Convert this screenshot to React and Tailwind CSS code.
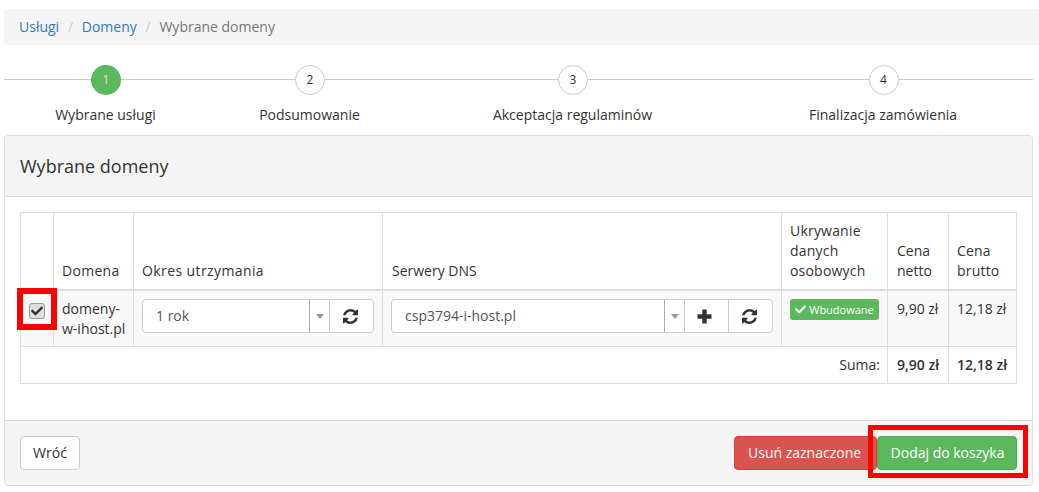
import React from "react";
import { FaCheck } from "react-icons/fa";

const steps = [
  ["1", "Wybrane usługi", true],
  ["2", "Podsumowanie", false],
  ["3", "Akceptacja regulaminów", false],
  ["4", "Finalizacja zamówienia", false],
];

function Caret() {
  return <span className="block w-0 h-0 border-x-[4px] border-x-transparent border-t-[5px] border-t-[#999]" />;
}

function Refresh() {
  return (
    <svg width="15" height="15" viewBox="0 0 1536 1536" fill="currentColor">
      <path d="M1511 928q0 5-1 7-64 268-268 434.5T764 1536q-146 0-282.500-55T238 1324l-129 129q-19 19-45 19t-45-19-19-45V960q0-26 19-45t45-19h448q26 0 45 19t19 45-19 45l-137 137q71 66 161 102t187 36q134 0 250-65t186-179q11-17 53-117 8-23 30-23h192q13 0 22.500 9.500t9.500 22.500zm25-800v448q0 26-19 45t-45 19h-448q-26 0-45-19t-19-45 19-45l138-138Q969 256 768 256q-134 0-250 65T332 500q-11 17-53 117-8 23-30 23H50q-13 0-22.500-9.500T18 608v-7q65-268 270-434.500T768 0q146 0 284 55.500T1297 212l130-129q19-19 45-19t45 19 19 45z" />
    </svg>
  );
}

function Plus() {
  return (
    <svg width="15" height="15" viewBox="0 0 15 15" fill="currentColor">
      <path d="M5.300 0.500h4.400v4.800h4.800v4.400h-4.800v4.800H5.300V9.700H0.500V5.300h4.800z" />
    </svg>
  );
}

function Group({ text, selectW, plus, total }) {
  return (
    <div className={`flex h-[34px] ${total} bg-white border border-[#ccc] rounded-[4px] text-[14px]`}>
      <div className={`flex items-center ${selectW} pl-[13px] text-[#555]`}>{text}</div>
      <div className="w-5 border-l border-[#aaa] flex items-center justify-center"><Caret /></div>
      {plus && (
        <div className="w-11 border-l border-[#ccc] flex items-center justify-center pr-[5px] text-[#333]">
          <Plus />
        </div>
      )}
      <div className="flex-1 border-l border-[#ccc] flex items-center justify-center pr-[3px] text-[#333]">
        <Refresh />
      </div>
    </div>
  );
}

export default function App() {
  return (
    <div className="relative w-[1039px] h-[492px] overflow-hidden bg-white pl-1 pt-[9px] text-[14px] leading-[20px] text-[#333] font-['Open_Sans',sans-serif]">
      <nav className="h-9 w-[1035px] bg-[#f5f5f5] rounded-l-[4px] flex items-center pl-[15px]">
        <a className="text-[#337ab7]">Usługi</a>
        <span className="text-[#ccc] px-[8.75px]">/</span>
        <a className="text-[#337ab7]">Domeny</a>
        <span className="text-[#ccc] px-[8.75px]">/</span>
        <span className="text-[#777]">Wybrane domeny</span>
      </nav>

      <div className="relative mt-[19px] w-[1029px] h-[71px] grid grid-cols-[204px_204px_322px_299px]">
        <div className="absolute left-0 right-0 top-[15px] h-px bg-[#ccc]" />
        {steps.map(([n, label, active]) => (
          <div key={n} className="relative flex flex-col items-center pt-px">
            <div className={`w-[30px] h-[30px] rounded-full flex items-center justify-center text-[12px] ${active ? "bg-[#5cb85c] text-[#e8e8a8]" : "bg-white border border-[#ccc] text-[#333]"}`}>
              {n}
            </div>
            <div className="mt-[10px] mr-px text-[14px] whitespace-nowrap">{label}</div>
          </div>
        ))}
      </div>

      <section className="w-[1029px] h-[351px] border border-[#ddd] rounded-[4px] flex flex-col">
        <header className="h-[61px] shrink-0 bg-[#f5f5f5] border-b border-[#ddd] rounded-t-[4px] flex items-center pl-[15px] text-[18px] text-[#333]">
          Wybrane domeny
        </header>
        <div className="flex-1 px-[15px] pt-[15px]">
          <table className="table-fixed border-collapse w-[996px] text-[14px] leading-[20px]">
            <colgroup>
              <col className="w-[33px]" />
              <col className="w-[80px]" />
              <col className="w-[249px]" />
              <col className="w-[399px]" />
              <col className="w-[106px]" />
              <col className="w-[61px]" />
              <col className="w-[68px]" />
            </colgroup>
            <thead>
              <tr className="h-[77px]">
                <th className="border border-[#ddd] border-b-2" />
                <th className="border border-[#ddd] border-b-2 px-2 py-2 align-bottom text-left font-medium tracking-[0.3px]">Domena</th>
                <th className="border border-[#ddd] border-b-2 px-2 py-2 align-bottom text-left font-medium tracking-[0.4px]">Okres utrzymania</th>
                <th className="border border-[#ddd] border-b-2 pl-[9px] pr-2 py-2 align-bottom text-left font-medium">Serwery DNS</th>
                <th className="border border-[#ddd] border-b-2 px-2 py-2 align-bottom text-left font-medium tracking-[0.2px]">Ukrywanie danych osobowych</th>
                <th className="border border-[#ddd] border-b-2 pl-[9px] pr-2 py-2 align-bottom text-left font-medium">Cena netto</th>
                <th className="border border-[#ddd] border-b-2 px-2 py-2 align-bottom text-left font-medium tracking-[0.2px]">Cena brutto</th>
              </tr>
            </thead>
            <tbody>
              <tr className="h-[56px] bg-[#f9f9f9] align-top">
                <td className="border border-[#ddd] p-0">
                  <div className="relative ml-2 mt-[12px] w-4 h-4 rounded-[3px] border border-[#999] bg-[#dedede] flex items-center justify-center text-[#333]">
                    <input type="checkbox" defaultChecked className="absolute inset-0 opacity-0" />
                    <FaCheck size={12} />
                  </div>
                </td>
                <td className="border border-[#ddd] px-2 pt-2 whitespace-nowrap">domeny-<br />w-ihost.pl</td>
                <td className="border border-[#ddd] px-2 pt-2">
                  <Group text="1 rok" total="w-[232px]" selectW="w-[166px]" />
                </td>
                <td className="border border-[#ddd] px-2 pt-2">
                  <Group text="csp3794-i-host.pl" total="w-[382px]" selectW="w-[272px]" plus />
                </td>
                <td className="border border-[#ddd] px-2 pt-2">
                  <span className="inline-flex items-center gap-[3px] h-[21px] w-[89px] justify-center bg-[#5cb85c] rounded-[3px] text-white text-[11px] font-normal whitespace-nowrap">
                    <FaCheck size={11} />
                    Wbudowane
                  </span>
                </td>
                <td className="border border-[#ddd] pl-[9px] pr-1 pt-2 whitespace-nowrap">9,90 zł</td>
                <td className="border border-[#ddd] px-2 pt-2 whitespace-nowrap">12,18 zł</td>
              </tr>
              <tr className="h-[37px]">
                <td colSpan={5} className="border border-[#ddd] pl-2 pr-[7px] text-right">Suma:</td>
                <td className="border border-[#ddd] pl-[9px] pr-1 font-semibold whitespace-nowrap">9,90 zł</td>
                <td className="border border-[#ddd] px-2 font-semibold whitespace-nowrap">12,18 zł</td>
              </tr>
            </tbody>
          </table>
        </div>
        <footer className="h-[65px] shrink-0 bg-[#f5f5f5] border-t border-[#ddd] rounded-b-[4px] flex items-start justify-between pl-[15px] pr-[15px] pt-[15px]">
          <button className="h-[34px] w-[60px] bg-white border border-[#ccc] rounded-[4px] text-[#333]">Wróć</button>
          <div className="flex">
            <button className="h-[34px] w-[143px] bg-[#d9534f] border border-[#d43f3a] rounded-[4px] text-white text-left pl-[13px]">Usuń zaznaczone</button>
            <button className="h-[34px] w-[140px] bg-[#5cb85c] border border-[#4cae4c] rounded-[4px] text-white pl-px">Dodaj do koszyka</button>
          </div>
        </footer>
      </section>

      <div className="absolute left-[17px] top-[288px] w-[40px] h-[42px] border-[6px] border-[#ff0000]" />
      <div className="absolute left-[868px] top-[425px] w-[160px] h-[53px] border-[5px] border-[#ff0000]" />
    </div>
  );
}
